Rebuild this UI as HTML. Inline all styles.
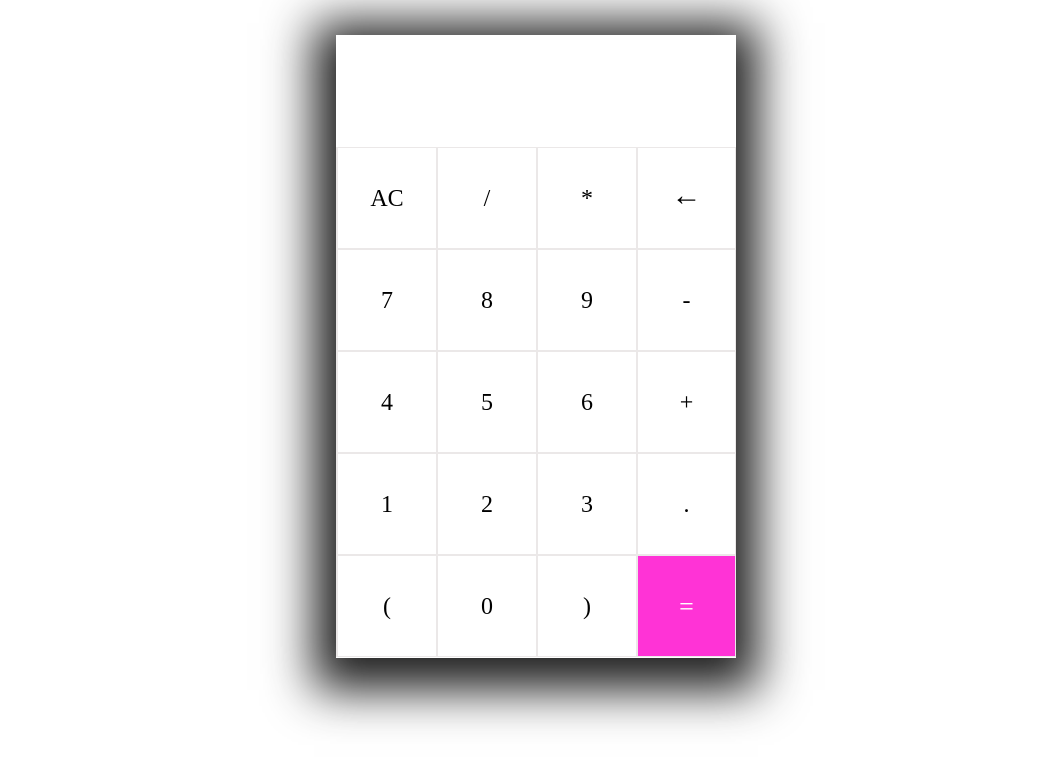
<!DOCTYPE html>
<html><head><style>
html,body{margin:0;padding:0;background:#fff;width:1063px;height:770px;overflow:hidden}
.calc{position:absolute;left:336px;top:35px;width:400px;height:623px;background:#fff;box-shadow:0 10px 45px 22px rgba(0,0,0,.88)}
.disp{height:112px}
.grid{display:flex;flex-wrap:wrap;width:400px}
.b{box-sizing:border-box;width:100px;height:102px;border:1px solid #ebe8e8;display:flex;align-items:center;justify-content:center;font-family:"Liberation Serif",serif;font-size:24px;color:#000;padding-top:2px}
.b:nth-child(4n+1){width:101px;border-left-width:2px}
.b:nth-child(4n){width:99px}
.eq{background:#ff33d6;color:#fff;font-size:26px}
.ar{font-size:30px;padding-top:0;padding-bottom:4px}
</style></head><body>
<div class="calc"><div class="disp"></div><div class="grid">
<div class="b">AC</div><div class="b">/</div><div class="b">*</div><div class="b ar">←</div>
<div class="b">7</div><div class="b">8</div><div class="b">9</div><div class="b">-</div>
<div class="b">4</div><div class="b">5</div><div class="b">6</div><div class="b">+</div>
<div class="b">1</div><div class="b">2</div><div class="b">3</div><div class="b">.</div>
<div class="b">(</div><div class="b">0</div><div class="b">)</div><div class="b eq">=</div>
</div></div>
</body></html>
